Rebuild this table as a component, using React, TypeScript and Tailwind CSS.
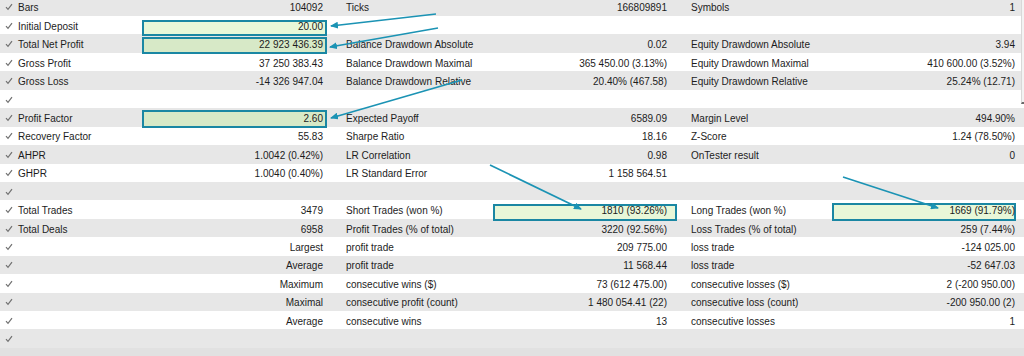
import React from "react";

type Row = {
  l1?: string;
  v1?: string;
  l2?: string;
  v2?: string;
  l3?: string;
  v3?: string;
};

const rows: Row[] = [
  { l1: "Bars", v1: "104092", l2: "Ticks", v2: "166809891", l3: "Symbols", v3: "1" },
  { l1: "Initial Deposit", v1: "20.00" },
  { l1: "Total Net Profit", v1: "22 923 436.39", l2: "Balance Drawdown Absolute", v2: "0.02", l3: "Equity Drawdown Absolute", v3: "3.94" },
  { l1: "Gross Profit", v1: "37 250 383.43", l2: "Balance Drawdown Maximal", v2: "365 450.00 (3.13%)", l3: "Equity Drawdown Maximal", v3: "410 600.00 (3.52%)" },
  { l1: "Gross Loss", v1: "-14 326 947.04", l2: "Balance Drawdown Relative", v2: "20.40% (467.58)", l3: "Equity Drawdown Relative", v3: "25.24% (12.71)" },
  {},
  { l1: "Profit Factor", v1: "2.60", l2: "Expected Payoff", v2: "6589.09", l3: "Margin Level", v3: "494.90%" },
  { l1: "Recovery Factor", v1: "55.83", l2: "Sharpe Ratio", v2: "18.16", l3: "Z-Score", v3: "1.24 (78.50%)" },
  { l1: "AHPR", v1: "1.0042 (0.42%)", l2: "LR Correlation", v2: "0.98", l3: "OnTester result", v3: "0" },
  { l1: "GHPR", v1: "1.0040 (0.40%)", l2: "LR Standard Error", v2: "1 158 564.51" },
  {},
  { l1: "Total Trades", v1: "3479", l2: "Short Trades (won %)", v2: "1810 (93.26%)", l3: "Long Trades (won %)", v3: "1669 (91.79%)" },
  { l1: "Total Deals", v1: "6958", l2: "Profit Trades (% of total)", v2: "3220 (92.56%)", l3: "Loss Trades (% of total)", v3: "259 (7.44%)" },
  { v1: "Largest", l2: "profit trade", v2: "209 775.00", l3: "loss trade", v3: "-124 025.00" },
  { v1: "Average", l2: "profit trade", v2: "11 568.44", l3: "loss trade", v3: "-52 647.03" },
  { v1: "Maximum", l2: "consecutive wins ($)", v2: "73 (612 475.00)", l3: "consecutive losses ($)", v3: "2 (-200 950.00)" },
  { v1: "Maximal", l2: "consecutive profit (count)", v2: "1 480 054.41 (22)", l3: "consecutive loss (count)", v3: "-200 950.00 (2)" },
  { v1: "Average", l2: "consecutive wins", v2: "13", l3: "consecutive losses", v3: "1" },
  {},
];

const Check = () => (
  <svg width="8" height="8" viewBox="0 0 8 8" className="ml-[5px] mt-[1px]">
    <path d="M1 4.2 L3 6.4 L7 1.2" fill="none" stroke="#707070" strokeWidth="1.2" />
  </svg>
);

const Cell = ({ label, value }: { label?: string; value?: string }) => (
  <div className="relative z-10 flex justify-between items-center pt-[2px]">
    <span>{label}</span>
    <span>{value}</span>
  </div>
);

// annotation boxes drawn over the value cells
const boxes = [
  "left-[142px] top-[20px] w-[185px] h-[16px] bg-[#e8f7d8]",
  "left-[142px] top-[37px] w-[185px] h-[17px] bg-[#d7e9c7]",
  "left-[142px] top-[110px] w-[185px] h-[18px] bg-[#d7e9c7]",
  "left-[493px] top-[204px] w-[184px] h-[17px] bg-[#e8f7d8]",
  "left-[832px] top-[203px] w-[184px] h-[18px] bg-[#e8f7d8]",
];

const arrows = [
  [436, 14, 331, 26],
  [438, 28, 330, 47],
  [462, 80, 331, 118],
  [490, 165, 581, 209],
  [843, 177, 938, 208],
];

export default function App() {
  return (
    <div className="relative w-[1024px] h-[356px] overflow-hidden bg-[#e1e1e1] text-[10px] text-[#1c1c1c] font-['Liberation_Sans',Arial,sans-serif]">
      {boxes.map((cls, i) => (
        <div key={i} className={`absolute z-[5] border-2 border-[#1a87a3] ${cls}`} />
      ))}

      <div className="flex flex-col -mt-[2.4px]">
        {rows.map((r, i) => (
          <div
            key={i}
            className={`grid grid-cols-[18px_305px_23px_321px_24px_324px_1fr] items-center h-[18.45px] ${
              i % 2 === 0 ? "bg-[#e7e7e7]" : "bg-white"
            }`}
          >
            <Check />
            <Cell label={r.l1} value={r.v1} />
            <div />
            <Cell label={r.l2} value={r.v2} />
            <div />
            <Cell label={r.l3} value={r.v3} />
            <div />
          </div>
        ))}
      </div>

      <svg className="absolute inset-0 z-30 pointer-events-none" width="1024" height="356">
        <defs>
          <marker id="head" markerWidth="8" markerHeight="7" refX="7" refY="3.5" orient="auto" markerUnits="userSpaceOnUse">
            <path d="M0 0 L8 3.5 L0 7 Z" fill="#1b93b4" />
          </marker>
        </defs>
        {arrows.map(([x1, y1, x2, y2], i) => (
          <line
            key={i}
            x1={x1}
            y1={y1}
            x2={x2}
            y2={y2}
            stroke="#1b93b4"
            strokeWidth="1.7"
            markerEnd="url(#head)"
          />
        ))}
      </svg>

      {/* scrollbar edge */}
      <div className="absolute right-0 top-0 w-[3px] h-[104px] bg-[#f3f3f3] border-l border-[#d8d8d8] border-b-2 border-b-[#6a6a6a]" />
    </div>
  );
}
